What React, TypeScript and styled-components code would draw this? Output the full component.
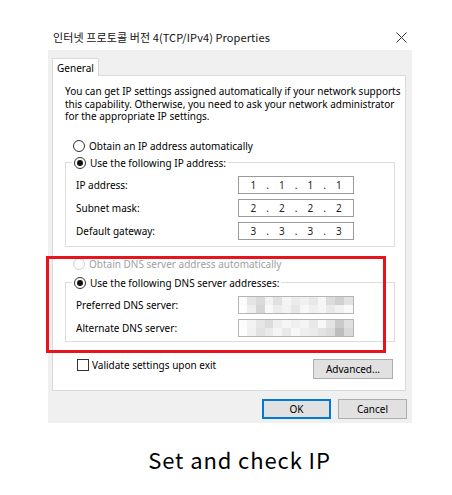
import styled, { createGlobalStyle } from "styled-components";

const GlobalStyle = createGlobalStyle`
  body {
    margin: 0;
    background: #fff;
    font-family: "Noto Sans", "Liberation Sans", sans-serif;
    color: #000;
  }
`;

const Page = styled.div`
  width: 452px;
  height: 495px;
  padding-top: 24px;
  box-sizing: border-box;
`;

const Window = styled.div`
  margin-left: 48px;
  width: 364px;
`;

const TitleBar = styled.div`
  height: 26px;
  display: flex;
  align-items: center;
  justify-content: space-between;
  padding: 0 5px 0 5px;
`;

const Title = styled.span`
  font-family: "Noto Sans CJK KR", "Noto Sans", sans-serif;
  font-size: 11px;
  letter-spacing: 0.1px;
  color: #111;
`;

const Body = styled.div`
  background: #f0f0f0;
  padding: 8px 6px 4px 4px;
`;

const TabStrip = styled.div`
  display: flex;
  position: relative;
  z-index: 1;
  margin-bottom: -1px;
`;

const Tab = styled.div`
  width: 47px;
  height: 18px;
  box-sizing: border-box;
  background: #fff;
  border: 1px solid #d9d9d9;
  border-bottom: none;
  font-size: 10px;
  display: flex;
  align-items: center;
  justify-content: center;
`;

const Panel = styled.div`
  position: relative;
  background: #fff;
  border: 1px solid #d9d9d9;
  padding: 9px 10px 11px 12px;
`;

const Intro = styled.div`
  font-size: 10px;
  line-height: 12.5px;
  white-space: nowrap;
  span {
    display: block;
  }
`;

const OptionRow = styled.label<{ $disabled?: boolean; $indent?: number }>`
  display: flex;
  align-items: center;
  gap: 4px;
  height: 14px;
  padding-left: ${(p) => p.$indent ?? 0}px;
  font-size: 10px;
  color: ${(p) => (p.$disabled ? "#a0a0a0" : "#000")};
  white-space: nowrap;
`;

const Radio = styled.span<{ $checked?: boolean; $disabled?: boolean }>`
  width: 12px;
  height: 12px;
  box-sizing: border-box;
  border-radius: 50%;
  border: 1px solid ${(p) => (p.$disabled ? "#cfcfcf" : "#333")};
  background: #fff;
  display: flex;
  align-items: center;
  justify-content: center;
  &::after {
    content: "";
    width: 6px;
    height: 6px;
    border-radius: 50%;
    background: ${(p) => (p.$checked ? "#111" : "transparent")};
  }
`;

const Group = styled.fieldset<{ $top: number; $bottom: number }>`
  margin: ${(p) => p.$top}px 0 0 0;
  padding: 6px 40px ${(p) => p.$bottom}px 10px;
  border: 1px solid #dcdcdc;
  display: flex;
  flex-direction: column;
  gap: 5px;
  legend {
    padding: 0 2px;
    margin-left: -4px;
  }
`;

const FieldRow = styled.div`
  display: flex;
  align-items: center;
  justify-content: space-between;
  height: 18px;
  font-size: 10px;
`;

const IpBox = styled.div`
  width: 116px;
  height: 18px;
  box-sizing: border-box;
  border: 1px solid #9a9a9a;
  background: #fff;
  display: flex;
  align-items: center;
  font-size: 10px;
  color: #222;
`;

const Octet = styled.span`
  flex: 1;
  text-align: center;
`;

const Dot = styled.span`
  width: 0;
  display: flex;
  justify-content: center;
`;

const Mosaic = styled.div`
  width: 116px;
  height: 18px;
  box-sizing: border-box;
  border: 1px solid #b5b5b5;
  background: #fff;
  display: grid;
  grid-template-columns: 8px repeat(12, 1fr);
  grid-template-rows: 1fr 1fr;
`;

const Cell = styled.span<{ $c: string }>`
  background: ${(p) => p.$c};
`;

const Footer = styled.div`
  margin-top: 17px;
  display: flex;
  justify-content: space-between;
  align-items: flex-start;
  padding-left: 12px;
  padding-right: 2px;
`;

const CheckRow = styled.label`
  display: flex;
  align-items: center;
  gap: 3px;
  font-size: 10px;
  height: 13px;
`;

const Checkbox = styled.span`
  width: 12px;
  height: 12px;
  box-sizing: border-box;
  border: 1px solid #333;
  background: #fff;
`;

const Button = styled.button<{ $primary?: boolean; $width: number }>`
  width: ${(p) => p.$width}px;
  height: 20px;
  box-sizing: border-box;
  background: #e1e1e1;
  border: 1px solid ${(p) => (p.$primary ? "#0078d7" : "#adadad")};
  box-shadow: ${(p) => (p.$primary ? "inset 0 0 0 1px #0078d7" : "none")};
  font-family: "Noto Sans", sans-serif;
  font-size: 10px;
  color: #000;
  padding: 0;
  display: flex;
  align-items: center;
  justify-content: center;
`;

const Buttons = styled.div`
  display: flex;
  justify-content: flex-end;
  gap: 7px;
  margin-top: 8px;
  margin-right: -1px;
`;

const Highlight = styled.div`
  position: absolute;
  left: -7px;
  top: 180px;
  width: 340px;
  height: 97px;
  box-sizing: border-box;
  border: 3px solid #e8141b;
  pointer-events: none;
`;

const Caption = styled.div`
  margin-top: 20px;
  text-align: center;
  font-family: "Noto Sans CJK KR", "Noto Sans", sans-serif;
  font-size: 22px;
  letter-spacing: 0.9px;
  padding-left: 27px;
`;

const shadesA = [
  "#fbfbfb", "#e4e4e4", "#dadada", "#f2f2f2", "#e0e0e0", "#f4f4f4", "#ebebeb", "#f0f0f0", "#e8e8e8", "#f6f6f6", "#dcdcdc", "#d0d0d0", "#e2e2e2",
  "#fdfdfd", "#eeeeee", "#d6d6d6", "#f8f8f8", "#ececec", "#f3f3f3", "#e6e6e6", "#f7f7f7", "#efefef", "#f5f5f5", "#e9e9e9", "#f1f1f1", "#f9f9f9",
];
const shadesB = [
  "#fcfcfc", "#f3f3f3", "#e6e6e6", "#dcdcdc", "#eeeeee", "#f6f6f6", "#f0f0f0", "#f4f4f4", "#e8e8e8", "#f8f8f8", "#e4e4e4", "#cacaca", "#e0e0e0",
  "#fdfdfd", "#f1f1f1", "#e2e2e2", "#eaeaea", "#f5f5f5", "#e9e9e9", "#f7f7f7", "#efefef", "#ebebeb", "#e3e3e3", "#dcdcdc", "#bdbdbd", "#d9d9d9",
];

function IpField({ value }: { value: string }) {
  const parts = value.split(".");
  return (
    <IpBox>
      {parts.map((p, i) => [
        i > 0 ? <Dot key={"d" + i}>.</Dot> : null,
        <Octet key={"o" + i}>{p}</Octet>,
      ])}
    </IpBox>
  );
}

function Blurred({ shades }: { shades: string[] }) {
  return (
    <Mosaic>
      {shades.map((c, i) => (
        <Cell key={i} $c={c} />
      ))}
    </Mosaic>
  );
}

export default function App() {
  return (
    <Page>
      <GlobalStyle />
      <Window>
        <TitleBar>
          <Title>인터넷 프로토콜 버전 4(TCP/IPv4) Properties</Title>
          <svg width="11" height="11" viewBox="0 0 11 11">
            <path d="M0.5 0.5 L10.5 10.5 M10.5 0.5 L0.5 10.5" stroke="#333" strokeWidth="1" fill="none" />
          </svg>
        </TitleBar>
        <Body>
          <TabStrip>
            <Tab>General</Tab>
          </TabStrip>
          <Panel>
            <Intro>
              <span>You can get IP settings assigned automatically if your network supports</span>
              <span>this capability. Otherwise, you need to ask your network administrator</span>
              <span>for the appropriate IP settings.</span>
            </Intro>
            <OptionRow $indent={8} style={{ marginTop: 16 }}>
              <Radio />
              Obtain an IP address automatically
            </OptionRow>
            <Group $top={3} $bottom={6}>
              <legend>
                <OptionRow>
                  <Radio $checked />
                  Use the following IP address:
                </OptionRow>
              </legend>
              <FieldRow>
                IP address:
                <IpField value="1.1.1.1" />
              </FieldRow>
              <FieldRow>
                Subnet mask:
                <IpField value="2.2.2.2" />
              </FieldRow>
              <FieldRow>
                Default gateway:
                <IpField value="3.3.3.3" />
              </FieldRow>
            </Group>
            <OptionRow $indent={8} $disabled style={{ marginTop: 10 }}>
              <Radio $disabled />
              Obtain DNS server address automatically
            </OptionRow>
            <Group $top={5} $bottom={4}>
              <legend>
                <OptionRow>
                  <Radio $checked />
                  Use the following DNS server addresses:
                </OptionRow>
              </legend>
              <FieldRow>
                Preferred DNS server:
                <Blurred shades={shadesA} />
              </FieldRow>
              <FieldRow>
                Alternate DNS server:
                <Blurred shades={shadesB} />
              </FieldRow>
            </Group>
            <Footer>
              <CheckRow>
                <Checkbox />
                Validate settings upon exit
              </CheckRow>
              <Button $width={80}>Advanced...</Button>
            </Footer>
            <Highlight />
          </Panel>
          <Buttons>
            <Button $primary $width={69}>OK</Button>
            <Button $width={69}>Cancel</Button>
          </Buttons>
        </Body>
      </Window>
      <Caption>Set and check IP</Caption>
    </Page>
  );
}
